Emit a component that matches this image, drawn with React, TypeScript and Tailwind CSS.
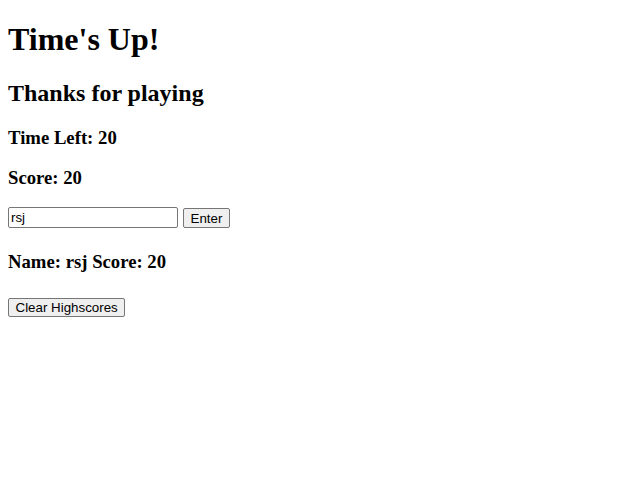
import { useState } from 'react';

const serif = 'font-["Liberation_Serif","Times_New_Roman",serif]';
const sans = 'font-["Liberation_Sans",Arial,sans-serif]';

export default function App() {
  const [name, setName] = useState('rsj');

  return (
    <div className={`min-h-[490px] bg-white px-2 pt-[21px] text-black ${serif}`}>
      <h1 className="text-[32px] font-bold leading-[37px]">Time's Up!</h1>
      <h2 className="mt-[21px] text-[24px] font-bold leading-[28px]">Thanks for playing</h2>
      <h3 className="mt-5 text-[18.72px] font-bold leading-[21px]">Time Left: 20</h3>
      <h3 className="mt-[19px] text-[18.72px] font-bold leading-[21px]">Score: 20</h3>

      <div className="mt-[19px] flex items-center gap-[5px]">
        <input
          value={name}
          onChange={(e) => setName(e.target.value)}
          className={`h-[21px] w-[170px] rounded-[2px] border border-[#767676] px-[2px] text-[13.33px] ${sans}`}
        />
        <button
          type="button"
          className={`h-[20px] rounded-[2px] border border-[#767676] bg-[#efefef] px-[6.5px] text-[13.33px] ${sans}`}
        >
          Enter
        </button>
      </div>

      <h3 className="mt-[23px] text-[18.72px] font-bold leading-[21px]">Name: rsj Score: 20</h3>

      <button
        type="button"
        className={`mt-[26px] block h-[19px] rounded-[2px] border border-[#767676] bg-[#efefef] px-[6.5px] text-[13.33px] leading-[15px] ${sans}`}
      >
        Clear Highscores
      </button>
    </div>
  );
}
